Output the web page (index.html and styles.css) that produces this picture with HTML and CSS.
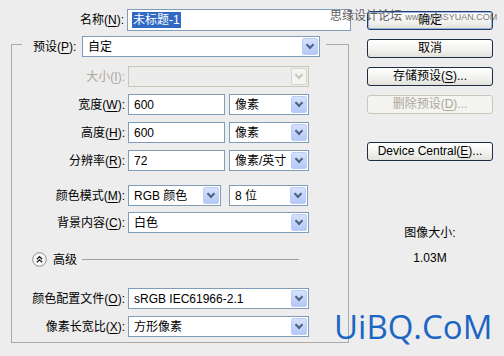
FILE: index.html
```html
<!DOCTYPE html>
<html>
<head>
<meta charset="utf-8">
<title>新建</title>
<link rel="stylesheet" href="styles.css">
</head>
<body>
<div class="dialog">
  <div class="main">
    <div class="name-row">
      <span class="lbl">名称(<u>N</u>):</span>
      <div class="box name-box"><span class="hilite">未标题-1</span></div>
    </div>

    <fieldset class="group">
      <legend class="preset">
        <span class="plabel">预设(<u>P</u>):</span>
        <div class="box select w-preset"><span class="val">自定</span><span class="arrow"></span></div>
      </legend>

      <div class="row dim">
        <span class="lbl">大小(<u>I</u>):</span>
        <div class="box select w-full off"><span class="val"></span><span class="arrow"></span></div>
      </div>
      <div class="row">
        <span class="lbl">宽度(<u>W</u>):</span>
        <div class="box w-num"><span class="val">600</span></div>
        <div class="box select w-unit"><span class="val">像素</span><span class="arrow"></span></div>
      </div>
      <div class="row">
        <span class="lbl">高度(<u>H</u>):</span>
        <div class="box w-num"><span class="val">600</span></div>
        <div class="box select w-unit"><span class="val">像素</span><span class="arrow"></span></div>
      </div>
      <div class="row">
        <span class="lbl">分辨率(<u>R</u>):</span>
        <div class="box w-num"><span class="val">72</span></div>
        <div class="box select w-unit"><span class="val">像素/英寸</span><span class="arrow"></span></div>
      </div>
      <div class="row sep">
        <span class="lbl">颜色模式(<u>M</u>):</span>
        <div class="box select w-mode"><span class="val">RGB 颜色</span><span class="arrow"></span></div>
        <div class="box select w-bits"><span class="val">8 位</span><span class="arrow"></span></div>
      </div>
      <div class="row tight">
        <span class="lbl">背景内容(<u>C</u>):</span>
        <div class="box select w-full"><span class="val">白色</span><span class="arrow"></span></div>
      </div>

      <div class="advanced">
        <svg class="toggle" width="15" height="15" viewBox="0 0 15 15">
          <circle cx="7.5" cy="7.5" r="6.8" fill="#f7f7f7" stroke="#8e8e8e"/>
          <path d="M4.8 7.2l2.7-2.5 2.7 2.5M4.8 10.3l2.7-2.5 2.7 2.5" fill="none" stroke="#222" stroke-width="1.3"/>
        </svg>
        <span class="adv-text">高级</span>
        <span class="rule"></span>
      </div>

      <div class="row">
        <span class="lbl">颜色配置文件(<u>O</u>):</span>
        <div class="box select w-full"><span class="val">sRGB IEC61966-2.1</span><span class="arrow"></span></div>
      </div>
      <div class="row">
        <span class="lbl">像素长宽比(<u>X</u>):</span>
        <div class="box select w-full"><span class="val">方形像素</span><span class="arrow"></span></div>
      </div>
    </fieldset>
  </div>

  <div class="side">
    <div class="btn default">确定</div>
    <div class="btn">取消</div>
    <div class="btn">存储预设(<u>S</u>)...</div>
    <div class="btn off">删除预设(<u>D</u>)...</div>
    <div class="btn device">Device Central(<u>E</u>)...</div>
    <div class="size-title">图像大小:</div>
    <div class="size-value">1.03M</div>
  </div>
</div>

<div class="mark-top"><span class="mark-cn">思缘设计论坛</span> <span class="mark-en">www.MISSYUAN.COM</span></div>
<div class="mark-bottom">UiBQ.CoM</div>
</body>
</html>
```

FILE: styles.css
```css
BODY {
	margin		: 0;
	width		: 504px;
	height		: 356px;
	overflow	: hidden;
	position	: relative;
	background	: #ededed;
	color		: #000;
	font-family	: "Liberation Sans", "Noto Sans CJK SC", sans-serif;
	font-size	: 12px;
	line-height	: 16px;
}
U {	text-decoration-thickness: 1px; text-underline-offset: 2px; }

.dialog {
	display		: flex;
	padding-top	: 9px;
}
.main {	width: 352px; }

/* labels and boxes */
.lbl {
	width		: 113px;
	text-align	: right;
	white-space	: nowrap;
	margin-right	: 3px;
}
.name-row {
	display		: flex;
	align-items	: center;
	height		: 22px;
}
.name-row .lbl { width: 124px; }

.box {
	box-sizing	: border-box;
	height		: 21px;
	border		: 1px solid #7f9db9;
	background	: #fff;
	display		: flex;
	align-items	: center;
}
.box .val {
	flex		: 1;
	padding-left	: 5px;
	white-space	: nowrap;
	overflow	: hidden;
}
.name-box {
	width		: 224px;
	height		: 22px;
	padding-left	: 4px;
}
.hilite {
	background	: #316ac5;
	color		: #fff;
	padding		: 0 1px;
}

/* dropdown button */
.select .arrow {
	box-sizing	: border-box;
	width		: 16px;
	height		: 17px;
	margin		: 0 1px;
	border		: 1px solid #b9cdf6;
	border-radius	: 2px;
	background	: linear-gradient(#d6e1fd, #b4c8f6);
	position	: relative;
}
.select .arrow::after {
	content		: "";
	position	: absolute;
	left		: 4px;
	top		: 3px;
	width		: 4px;
	height		: 4px;
	border-right	: 2px solid #4d6185;
	border-bottom	: 2px solid #4d6185;
	transform	: rotate(45deg);
}
.select.off {
	border-color	: #c9c7ba;
	background	: #ececec;
}
.select.off .arrow {
	border-color	: #d8d6cc;
	background	: #f4f4f0;
}
.select.off .arrow::after { border-color: #c9c7ba; }

.w-preset {	width: 238px; }
.w-full {	width: 181px; }
.w-num {	width: 97px; margin-right: 4px; }
.w-unit {	width: 80px; }
.w-mode {	width: 93px; margin-right: 8px; }
.w-bits {	width: 79px; }

/* group box */
.group {
	margin		: 0 0 0 11px;
	padding		: 9px 0 5px 0;
	width		: 338px;
	box-sizing	: border-box;
	border		: 1px solid #aaaaaa;
	min-inline-size	: 0;
}
.preset {
	margin-left	: 10px;
	padding		: 5px 6px 0 11px;
	display		: flex;
	align-items	: center;
}
.plabel {
	width		: 44px;
	margin-right	: 5px;
	white-space	: nowrap;
}

.row {
	display		: flex;
	align-items	: center;
	height		: 21px;
	margin-top	: 7px;
}
.row:first-of-type {	margin-top: 0; }
.row.sep {	margin-top: 14px; }
.row.tight {	margin-top: 6px; }
.row.dim .lbl {	color: #aca899; }

.advanced {
	display		: flex;
	align-items	: center;
	height		: 15px;
	margin		: 19px 0 21px 20px;
}
.toggle {	margin-right: 6px; }
.adv-text {	margin-right: 5px; }
.rule {
	flex		: 0 0 217px;
	border-top	: 1px solid #a0a0a0;
}

/* buttons */
.side {
	margin-left	: 15px;
	padding-top	: 2px;
	width		: 126px;
	text-align	: center;
}
.btn {
	box-sizing	: border-box;
	height		: 19px;
	line-height	: 17px;
	margin-bottom	: 9px;
	border		: 1px solid #1f2d44;
	border-radius	: 3px;
	background	: linear-gradient(#ffffff, #f1f1ee 60%, #e2e1da);
	white-space	: nowrap;
}
.btn.default {
	border-color	: #243c6a;
	box-shadow	: inset 0 0 0 1px #98b4e0;
}
.btn.off {
	border-color	: #c9c7ba;
	background	: #f4f4f0;
	color		: #aca899;
}
.btn.device {	margin-top: 28px; }

.size-title {
	margin-top	: 64px;
}
.size-value {
	margin-top	: 9px;
}

/* watermarks laid over the dialog */
.mark-top {
	position	: absolute;
	left		: 330px;
	top		: 8px;
	color		: #5e5e5e;
	white-space	: nowrap;
	line-height	: 16px;
}
.mark-cn {	font-size: 12px; }
.mark-en {
	font-size	: 9px;
	color		: #7a7a7a;
}
.mark-bottom {
	position	: absolute;
	left		: 334px;
	top		: 307px;
	font-family	: "Open Sans", sans-serif;
	font-size	: 33px;
	line-height	: 40px;
	color		: #1b65c4;
}
```
